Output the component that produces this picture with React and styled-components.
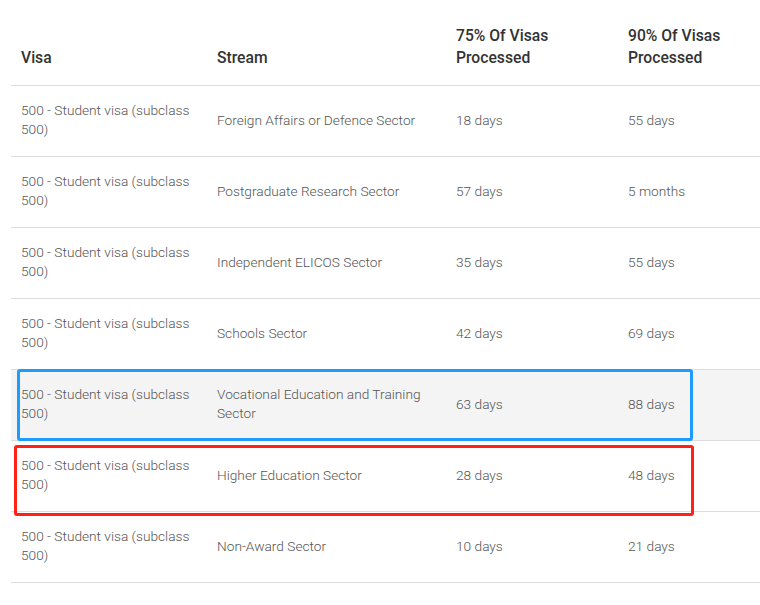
import React from "react";
import styled, { createGlobalStyle } from "styled-components";

const GlobalStyle = createGlobalStyle`
  html, body {
    margin: 0;
    padding: 0;
    background: #fff;
    overflow: hidden;
  }
  body {
    font-family: Roboto, "Liberation Sans", sans-serif;
  }
`;

const rows = [
  { stream: "Foreign Affairs or Defence Sector", p75: "18 days", p90: "55 days" },
  { stream: "Postgraduate Research Sector", p75: "57 days", p90: "5 months" },
  { stream: "Independent ELICOS Sector", p75: "35 days", p90: "55 days" },
  { stream: "Schools Sector", p75: "42 days", p90: "69 days" },
  { stream: "Vocational Education and Training Sector", p75: "63 days", p90: "88 days", hover: true },
  { stream: "Higher Education Sector", p75: "28 days", p90: "48 days" },
  { stream: "Non-Award Sector", p75: "10 days", p90: "21 days" },
];

const App = () => {
  return (
    <>
      <GlobalStyle />
      <Page>
        <Table>
          <colgroup>
            <col style={{ width: 196 }} />
            <col style={{ width: 239 }} />
            <col style={{ width: 172 }} />
            <col style={{ width: 172 }} />
          </colgroup>
          <thead>
            <tr>
              <Th>Visa</Th>
              <Th>Stream</Th>
              <Th>75% Of Visas Processed</Th>
              <Th>90% Of Visas Processed</Th>
            </tr>
          </thead>
          <tbody>
            {rows.map((r, i) => (
              <Row key={i} $hover={r.hover}>
                <Td>500 - Student visa (subclass 500)</Td>
                <Td>{r.stream}</Td>
                <Td>{r.p75}</Td>
                <Td>{r.p90}</Td>
              </Row>
            ))}
          </tbody>
        </Table>
        <Highlight $color="#1e9bff" $left={17} $top={369} $width={676} $height={72} />
        <Highlight $color="#ff2018" $left={14} $top={445} $width={680} $height={71} />
      </Page>
    </>
  );
};

const Page = styled.div`
  position: relative;
  width: 760px;
  height: 605px;
  padding: 8px 0 0 11px;
  box-sizing: border-box;
`;

const Table = styled.table`
  border-collapse: collapse;
  table-layout: fixed;
  width: 779px;
`;

const Th = styled.th`
  text-align: left;
  vertical-align: bottom;
  padding: 17px 10px 16px;
  font-size: 15.7px;
  line-height: 22px;
  font-weight: 500;
  color: #333;
  border-bottom: 1px solid #dddddd;
`;

const Row = styled.tr`
  background: ${(p) => (p.$hover ? "#f4f4f4" : "#fff")};
`;

const Td = styled.td`
  vertical-align: middle;
  padding: 15px 10px 17px;
  font-size: 13.7px;
  line-height: 19px;
  font-weight: 300;
  color: #555;
  border-bottom: 1px solid #dddddd;
`;

const Highlight = styled.div`
  position: absolute;
  left: ${(p) => p.$left}px;
  top: ${(p) => p.$top}px;
  width: ${(p) => p.$width}px;
  height: ${(p) => p.$height}px;
  box-sizing: border-box;
  border: 3px solid ${(p) => p.$color};
  border-radius: 3px;
  pointer-events: none;
`;

export default App;
